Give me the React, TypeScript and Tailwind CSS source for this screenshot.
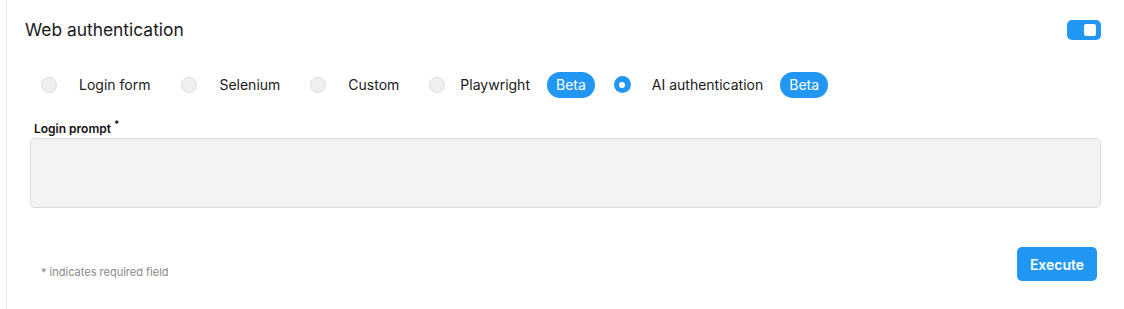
import React from "react";

const options = [
  { label: "Login form", gap: "ml-[22px]", after: "mr-[31px]" },
  { label: "Selenium", gap: "ml-[22px]", after: "mr-[30px]" },
  { label: "Custom", gap: "ml-[22px]", after: "mr-[30px]" },
  { label: "Playwright", gap: "ml-[15px]", after: "mr-[16px]", beta: true },
  { label: "AI authentication", gap: "ml-[21px]", after: "mr-[17px]", beta: true, checked: true },
];

const Radio = ({ checked }: { checked?: boolean }) =>
  checked ? (
    <div className="w-[17px] h-[17px] rounded-full bg-[#2196f3] flex items-center justify-center shrink-0">
      <div className="w-[6px] h-[6px] rounded-full bg-white" />
    </div>
  ) : (
    <div className="w-[16px] h-[16px] rounded-full bg-[#efefef] border border-[#dedede] shrink-0" />
  );

const Beta = ({ cls }: { cls: string }) => (
  <div className={`${cls} h-[26px] px-[9px] rounded-full bg-[#2196f3] text-white text-[14px] flex items-center`}>
    Beta
  </div>
);

export default function App() {
  return (
    <div className="w-[1124px] h-[309px] bg-white font-['Inter',sans-serif] text-[#1a1a1a]">
      <div className="ml-[6px] h-full border-l border-[#ececec]">
        <div className="flex items-center justify-between pl-[18px] pr-[23px] pt-[16px]">
          <h1 className="text-[17.4px] leading-[28px] font-normal">Web authentication</h1>
          <div className="w-[34px] h-[20px] rounded-[5px] bg-[#2196f3] flex items-center justify-end pr-[5px]">
            <div className="w-[12px] h-[12px] rounded-[2px] bg-white" />
          </div>
        </div>

        <div className="flex items-center pl-[34px] mt-[27px] h-[27px]">
          {options.map((o) => (
            <div key={o.label} className="flex items-center">
              <Radio checked={o.checked} />
              <span className={`${o.gap} text-[14px] ${o.beta ? "" : o.after}`}>{o.label}</span>
              {o.beta && <Beta cls={`ml-[17px] ${o.after === "mr-[16px]" ? "mr-[19px]" : ""}`} />}
            </div>
          ))}
        </div>

        <div className="pl-[23px] pr-[23px] mt-[23px]">
          <label className="block pl-[4px] text-[12px] leading-[16px] font-semibold text-[#111]">
            Login prompt<span className="ml-[3px] text-[10px] relative -top-[5px]">*</span>
          </label>
          <textarea className="block mt-[1px] w-full h-[70px] rounded-[5px] bg-[#f3f3f3] border border-[#dddddd] resize-none outline-none" />
        </div>

        <div className="flex items-start justify-between pl-[34px] pr-[27px] mt-[39px]">
          <p className="mt-[17px] text-[11px] text-[#8a8a8a]">* indicates required field</p>
          <button className="w-[80px] h-[34px] rounded-[5px] bg-[#2196f3] text-white text-[14px] font-semibold">
            Execute
          </button>
        </div>
      </div>
    </div>
  );
}
